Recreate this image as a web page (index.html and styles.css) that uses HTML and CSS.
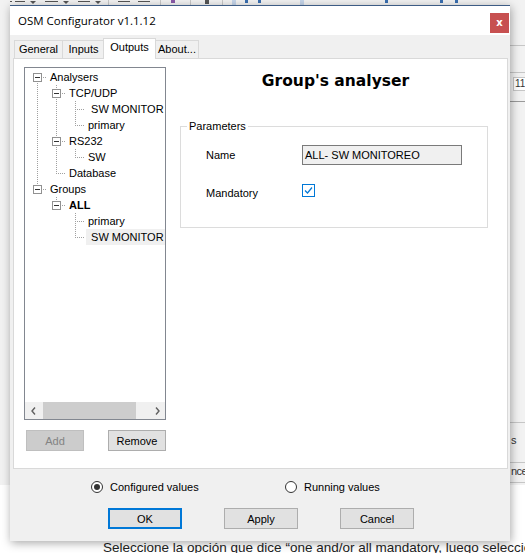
FILE: index.html
```html
<!DOCTYPE html>
<html>
<head>
    <title>OSM Configurator v1.1.12</title>
    <link rel="stylesheet" href="styles.css">
</head>
<body>
    <!-- Word document behind the dialog -->
    <svg class="ribbon" width="525" height="6">
        <g stroke="#555" fill="none">
            <path d="M10 1.5H12 M15 1.5H25 M45 1.5H58 M78 1.5H90 M118 1.5H130 M138 1.5H150" />
            <path d="M108.5 0V6 M160.5 0V6 M190.5 0V6 M222.5 0V6" stroke="#c8c8c8" />
        </g>
        <g fill="#555">
            <polygon points="30,1 36,1 33,4" />
            <polygon points="63,1 69,1 66,4" />
            <polygon points="95,1 101,1 98,4" />
            <rect x="205" y="0" width="4" height="4" />
        </g>
        <rect x="171" y="0" width="4" height="3" fill="#8a5aa8" />
        <rect x="232" y="0" width="4" height="6" fill="#c5d5ea" />
        <rect x="300" y="0" width="4" height="6" fill="#c5d5ea" />
        <g fill="#3a6fb0">
            <rect x="245" y="0" width="3" height="3" />
            <rect x="258" y="0" width="3" height="3" />
            <rect x="385" y="0" width="3" height="3" />
            <rect x="440" y="0" width="3" height="3" />
            <rect x="455" y="0" width="3" height="3" />
        </g>
    </svg>
    <div class="pane-line" style="top: 45px"></div>
    <div class="pane-line" style="top: 72px"></div>
    <div class="pane-size">11</div>
    <div class="pane-line dark" style="top: 101px"></div>
    <div class="pane-line" style="top: 422px"></div>
    <div class="pane-text" style="top: 434px">s</div>
    <div class="pane-line" style="top: 462px"></div>
    <div class="pane-text" style="top: 465px">nce</div>
    <div class="pane-line" style="top: 482px"></div>
    <div class="doc">
        <p class="doc-text">Seleccione la opción que dice “<u>one</u> <u>and/or</u> <u>all mandatory</u>, luego seleccione</p>
    </div>

    <div class="window">
        <div class="titlebar">
            <span class="title">OSM Configurator v1.1.12</span>
            <button class="close">x</button>
        </div>

        <div class="tabs">
            <div class="tab" style="width: 49px">General</div>
            <div class="tab" style="width: 43px">Inputs</div>
            <div class="tab active" style="width: 53px">Outputs</div>
            <div class="tab" style="width: 44px">About...</div>
        </div>

        <div class="panel">
            <div class="left">
                <div class="tree">
                    <div class="nodes">
                        <svg class="tree-lines" width="140" height="180">
                            <path d="M12.5 9V121 M12 9.5H22 M12 121.5H22
                                     M31.5 17V105 M31 25.5H41 M31 73.5H41 M31 105.5H41
                                     M31.5 129V137 M31 137.5H41
                                     M50.5 33V57 M50 41.5H60 M50 57.5H60
                                     M50.5 81V89 M50 89.5H60
                                     M50.5 145V169 M50 153.5H60 M50 169.5H60"
                                  stroke="#a0a0a0" stroke-dasharray="1 1" fill="none" />
                            <g class="expander">
                                <rect x="8.5" y="5.5" width="8" height="8" /><path d="M10 9.5H15" />
                                <rect x="27.5" y="21.5" width="8" height="8" /><path d="M29 25.5H34" />
                                <rect x="27.5" y="69.5" width="8" height="8" /><path d="M29 73.5H34" />
                                <rect x="8.5" y="117.5" width="8" height="8" /><path d="M10 121.5H15" />
                                <rect x="27.5" y="133.5" width="8" height="8" /><path d="M29 137.5H34" />
                            </g>
                        </svg>
                        <div class="node l0"><span>Analysers</span></div>
                        <div class="node l1"><span>TCP/UDP</span></div>
                        <div class="node l2"><span>&nbsp;SW MONITOR</span></div>
                        <div class="node l2"><span>primary</span></div>
                        <div class="node l1"><span>RS232</span></div>
                        <div class="node l2"><span>SW</span></div>
                        <div class="node l1"><span>Database</span></div>
                        <div class="node l0"><span>Groups</span></div>
                        <div class="node l1"><span class="bold">ALL</span></div>
                        <div class="node l2"><span>primary</span></div>
                        <div class="node l2 selected"><span>&nbsp;SW MONITOR</span></div>
                    </div>
                    <div class="hscroll">
                        <div class="arrow">
                            <svg width="8" height="8"><polyline points="5,0.5 2,4 5,7.5" /></svg>
                        </div>
                        <div class="thumb"></div>
                        <div class="track"></div>
                        <div class="arrow">
                            <svg width="8" height="8"><polyline points="3,0.5 6,4 3,7.5" /></svg>
                        </div>
                    </div>
                </div>
                <div class="tree-buttons">
                    <button class="btn" disabled>Add</button>
                    <button class="btn">Remove</button>
                </div>
            </div>

            <div class="right">
                <h1>Group's analyser</h1>
                <fieldset class="params">
                    <legend>Parameters</legend>
                    <div class="field">
                        <label>Name</label>
                        <div class="textbox">ALL- SW MONITOREO</div>
                    </div>
                    <div class="field second">
                        <label>Mandatory</label>
                        <span class="checkbox">
                            <svg width="11" height="11"><path d="M2 5.5L4.5 8L9 2.5" /></svg>
                        </span>
                    </div>
                </fieldset>
            </div>
        </div>

        <div class="modes">
            <label class="radio first"><span class="dot on"></span>Configured values</label>
            <label class="radio"><span class="dot"></span>Running values</label>
        </div>

        <div class="actions">
            <button class="btn wide default">OK</button>
            <button class="btn wide">Apply</button>
            <button class="btn wide">Cancel</button>
        </div>
    </div>
</body>
</html>
```

FILE: styles.css
```css
* {
    box-sizing: border-box;
}

body {
    margin: 0;
    width: 525px;
    height: 553px;
    position: relative;
    overflow: hidden;
    background: #f2f2f2;
    font-family: "Liberation Sans", Arial, sans-serif;
    font-size: 11px;
    color: #000;
}

/* background: the Word window */
.ribbon {
    position: absolute;
    top: 0;
    left: 0;
}

.pane-line {
    position: absolute;
    left: 510px;
    width: 15px;
    height: 1px;
    background: #c6c6c6;
}

.pane-line.dark {
    background: #9a9a9a;
}

.pane-size {
    position: absolute;
    left: 513px;
    top: 77px;
    width: 12px;
    height: 14px;
    border: 1px solid #c6c6c6;
    border-right: none;
    background: #fff;
    padding-left: 1px;
    font-size: 10px;
    line-height: 12px;
    color: #333;
}

.pane-text {
    position: absolute;
    left: 511px;
    font-size: 11px;
    letter-spacing: -0.5px;
    color: #333;
}

.doc {
    position: absolute;
    left: 0;
    top: 485px;
    width: 525px;
    height: 68px;
    background: #fff;
}

.doc-text {
    margin: 0;
    position: absolute;
    left: 103px;
    top: 55px;
    white-space: nowrap;
    font-size: 13.5px;
    line-height: 16px;
    color: #222;
}

.doc-text u {
    text-decoration: underline wavy #e03030;
}

/* dialog */
.window {
    position: absolute;
    left: 10px;
    top: 5px;
    width: 500px;
    height: 536px;
    background: #f0f0f0;
    box-shadow: 1px 2px 9px rgba(0, 0, 0, 0.35);
    display: flex;
    flex-direction: column;
}

.titlebar {
    height: 30px;
    flex: none;
    background: #fff;
    border-top: 1px solid #3d5c85;
    display: flex;
    justify-content: space-between;
    align-items: flex-start;
}

.title {
    margin: 7px 0 0 8px;
    font-family: "Open Sans", "Noto Sans", sans-serif;
    font-size: 11.5px;
    line-height: 16px;
}

.close {
    margin: 7px 1px 0 0;
    width: 19px;
    height: 20px;
    padding: 0;
    border: none;
    background: #c75050;
    color: #fff;
    font-family: "DejaVu Sans", sans-serif;
    font-size: 10px;
    font-weight: bold;
    line-height: 18px;
}

.tabs {
    display: flex;
    align-items: flex-end;
    height: 20px;
    margin: 3px 0 0 4px;
    position: relative;
    z-index: 1;
}

.tab {
    height: 18px;
    margin-right: -1px;
    border: 1px solid #d9d9d9;
    border-bottom: none;
    background: #f0f0f0;
    text-align: center;
    line-height: 17px;
}

.tab.active {
    height: 21px;
    margin: 0 -1px -1px -1px;
    background: #fff;
    position: relative;
    z-index: 1;
}

.panel {
    height: 411px;
    margin: 0 2px 0 3px;
    padding: 8px 0 0 10px;
    background: #fff;
    border: 1px solid #d9d9d9;
    display: flex;
}

/* tree */
.left {
    width: 142px;
    flex: none;
}

.tree {
    height: 353px;
    border: 1px solid #828790;
    background: #fff;
    display: flex;
    flex-direction: column;
}

.nodes {
    flex: 1;
    padding-top: 1px;
    overflow: hidden;
    position: relative;
}

.tree-lines {
    position: absolute;
    left: 0;
    top: 0;
}

.expander rect {
    fill: #fff;
    stroke: #919191;
}

.expander path {
    stroke: #333;
}

.node {
    height: 16px;
    line-height: 16px;
    white-space: nowrap;
}

.node span {
    display: inline-block;
    padding: 0 2px;
}

.node .bold {
    font-weight: bold;
}

.l0 {
    padding-left: 23px;
}

.l1 {
    padding-left: 42px;
}

.l2 {
    padding-left: 61px;
}

.node.selected span {
    background: #f0f0f0;
    padding-right: 8px;
}

.hscroll {
    height: 17px;
    flex: none;
    display: flex;
    background: #f0f0f0;
}

.arrow {
    width: 17px;
    display: flex;
    align-items: center;
    justify-content: center;
}

.arrow polyline {
    fill: none;
    stroke: #606060;
    stroke-width: 1.4;
}

.thumb {
    width: 93px;
    margin-left: 1px;
    background: #cdcdcd;
}

.track {
    flex: 1;
}

/* buttons */
.btn {
    width: 58px;
    height: 21px;
    padding: 0;
    border: 1px solid #adadad;
    background: #e1e1e1;
    color: #000;
    font-family: inherit;
    font-size: 11px;
}

.btn:disabled {
    background: #cccccc;
    border-color: #bfbfbf;
    color: #838383;
}

.tree-buttons {
    display: flex;
    gap: 24px;
    margin: 10px 0 0 2px;
}

/* right side */
.right {
    width: 308px;
    margin-left: 14px;
}

.right h1 {
    margin: 4px 0 0 3px;
    text-align: center;
    font-family: "DejaVu Sans", Verdana, sans-serif;
    font-size: 15.5px;
    line-height: 20px;
}

.params {
    margin: 28px 0 0;
    padding: 0 0 24px;
    border: 1px solid #dcdcdc;
}

.params legend {
    margin-left: 6px;
    padding: 0 2px;
    line-height: 14px;
}

.field {
    display: flex;
    align-items: flex-start;
    margin-top: 12px;
    padding-left: 25px;
}

.field.second {
    margin-top: 18px;
}

.field label {
    width: 96px;
    line-height: 20px;
}

.textbox {
    width: 160px;
    height: 20px;
    border: 1px solid #7a7a7a;
    background: #f0f0f0;
    padding-left: 2px;
    line-height: 18px;
}

.checkbox {
    margin-top: 1px;
    width: 13px;
    height: 13px;
    border: 1px solid #0078d7;
    background: #fff;
    display: flex;
}

.checkbox path {
    fill: none;
    stroke: #0078d7;
    stroke-width: 1.2;
}

/* bottom of the dialog */
.modes {
    display: flex;
    align-items: center;
    height: 14px;
    margin: 11px 0 0 81px;
}

.radio {
    display: flex;
    align-items: center;
    gap: 7px;
}

.radio.first {
    width: 194px;
}

.dot {
    width: 12px;
    height: 12px;
    border: 1px solid #333;
    border-radius: 50%;
    background: #fff;
    display: flex;
    align-items: center;
    justify-content: center;
}

.dot.on::after {
    content: "";
    width: 6px;
    height: 6px;
    border-radius: 50%;
    background: #333;
}

.actions {
    display: flex;
    gap: 42px;
    margin: 14px 0 0 98px;
}

.btn.wide {
    width: 74px;
}

.btn.default {
    border: 2px solid #0078d7;
}
```
